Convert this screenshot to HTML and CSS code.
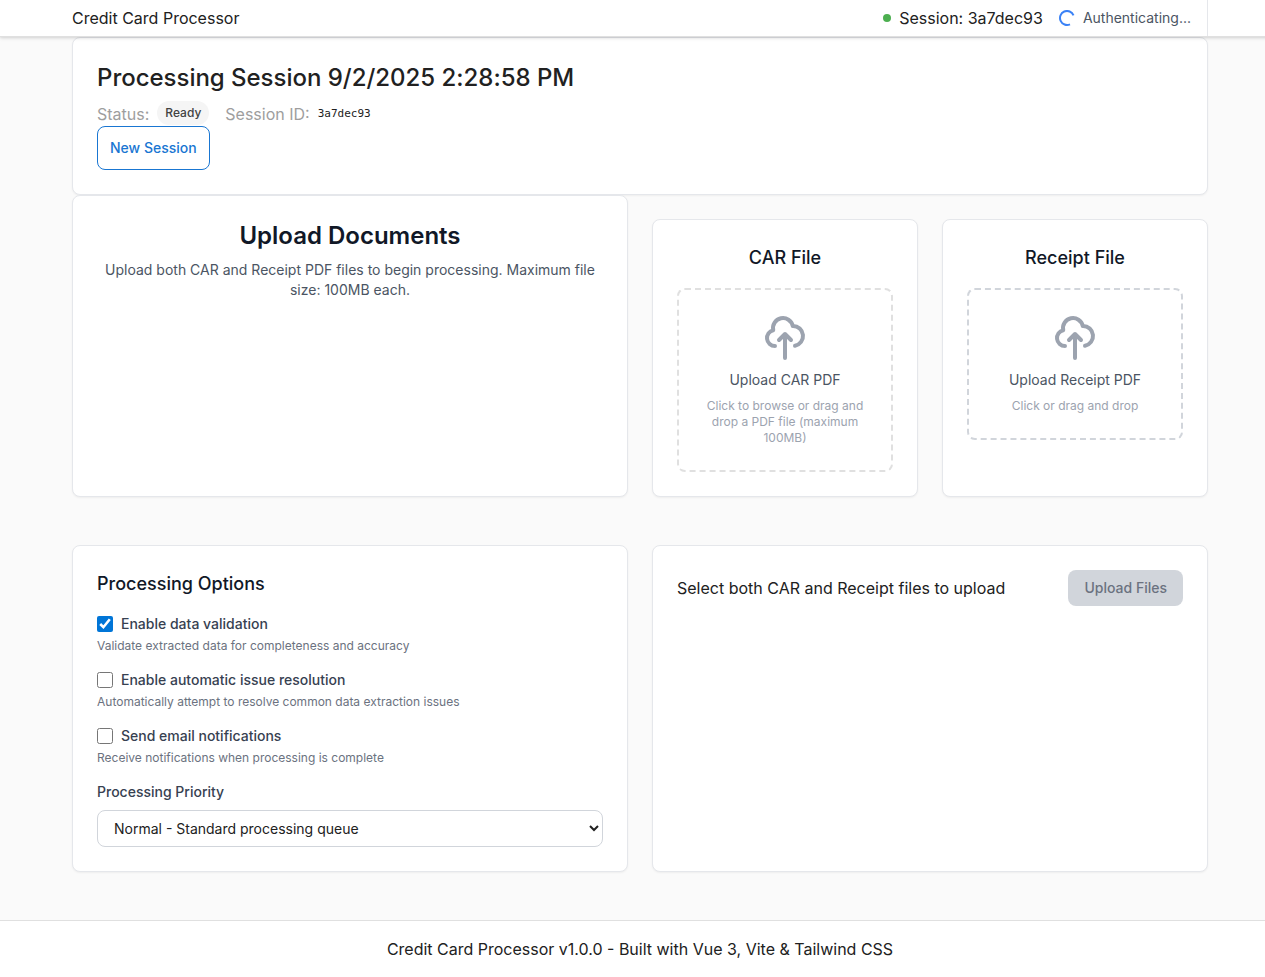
FILE: index.html
```html
<!DOCTYPE html>
<html lang="en">
<head>
<meta charset="utf-8">
<title>Credit Card Processor</title>
<link rel="stylesheet" href="styles.css">
</head>
<body>
<div class="page">
  <header class="header">
    <div class="container header-row">
      <div class="brand">Credit Card Processor</div>
      <div class="header-right">
        <span class="dot"></span>
        <span class="header-session">Session: 3a7dec93</span>
        <div class="auth">
          <svg class="spinner" viewBox="0 0 16 16" fill="none"><path d="M14.5 5.3A7 7 0 1 0 11 14.3"/></svg>
          <span>Authenticating...</span>
        </div>
      </div>
    </div>
  </header>
  <main class="container main">
    <section class="card">
      <h1 class="session-title">Processing Session 9/2/2025 2:28:58 PM</h1>
      <div class="status-row">
        <span class="muted">Status:</span>
        <span class="badge">Ready</span>
        <span class="muted id-label">Session ID:</span>
        <code class="session-id">3a7dec93</code>
      </div>
      <button class="btn-outline">New Session</button>
    </section>
    <section class="grid">
      <div class="card intro">
        <h2 class="intro-title">Upload Documents</h2>
        <p class="intro-text">Upload both CAR and Receipt PDF files to begin processing. Maximum file size: 100MB each.</p>
      </div>
      <div class="uploads">
        <div class="card upload">
          <h3 class="card-title">CAR File</h3>
          <div class="drop drop-neutral">
            <svg class="cloud" viewBox="0 0 24 24" fill="none"><path d="M7 16a4 4 0 01-.88-7.903A5 5 0 1115.9 6L16 6a5 5 0 011 9.9M15 13l-3-3m0 0l-3 3m3-3v12"/></svg>
            <p class="drop-title">Upload CAR PDF</p>
            <p class="drop-hint">Click to browse or drag and drop a PDF file (maximum 100MB)</p>
          </div>
        </div>
        <div class="card upload">
          <h3 class="card-title">Receipt File</h3>
          <div class="drop">
            <svg class="cloud" viewBox="0 0 24 24" fill="none"><path d="M7 16a4 4 0 01-.88-7.903A5 5 0 1115.9 6L16 6a5 5 0 011 9.9M15 13l-3-3m0 0l-3 3m3-3v12"/></svg>
            <p class="drop-title">Upload Receipt PDF</p>
            <p class="drop-hint">Click or drag and drop</p>
          </div>
        </div>
      </div>
    </section>
    <section class="grid grid-lower">
      <div class="card">
        <h3 class="card-title">Processing Options</h3>
        <div class="option">
          <label class="option-label"><input class="check" type="checkbox" checked><span>Enable data validation</span></label>
          <p class="option-hint">Validate extracted data for completeness and accuracy</p>
        </div>
        <div class="option">
          <label class="option-label"><input class="check" type="checkbox"><span>Enable automatic issue resolution</span></label>
          <p class="option-hint">Automatically attempt to resolve common data extraction issues</p>
        </div>
        <div class="option">
          <label class="option-label"><input class="check" type="checkbox"><span>Send email notifications</span></label>
          <p class="option-hint">Receive notifications when processing is complete</p>
        </div>
        <label class="option-label" for="priority">Processing Priority</label>
        <select class="select" id="priority"><option>Normal - Standard processing queue</option></select>
      </div>
      <div class="card">
        <div class="action-row">
          <span>Select both CAR and Receipt files to upload</span>
          <button class="btn-disabled" disabled>Upload Files</button>
        </div>
      </div>
    </section>
  </main>
  <footer class="footer">Credit Card Processor v1.0.0 - Built with Vue 3, Vite &amp; Tailwind CSS</footer>
</div>
</body>
</html>
```

FILE: styles.css
```css
*, *::before, *::after { box-sizing: border-box; }
html { overflow: hidden; }
body {
  margin: 0;
  background: #fafafa;
  color: #212121;
  font-family: Inter, "Liberation Sans", sans-serif;
  font-size: 16px;
  line-height: 24px;
}
h1, h2, h3, p { margin: 0; }
button, select { font-family: inherit; letter-spacing: inherit; }
.page { width: 1280px; }
.container { width: 1200px; margin: 0 auto; padding: 0 32px; }

.header {
  position: relative;
  height: 37px;
  background: #fff;
  border-bottom: 1px solid #e0e0e0;
  box-shadow: 0 1px 4px rgba(0, 0, 0, .12), 0 1px 2px rgba(0, 0, 0, .06);
}
.header-row { display: flex; justify-content: space-between; align-items: center; height: 36px; }
.header-right { display: flex; align-items: center; height: 36px; }
.dot { width: 8px; height: 8px; border-radius: 50%; background: #4caf50; margin-right: 8px; }
.auth {
  display: flex;
  align-items: center;
  gap: 8px;
  height: 36px;
  padding: 0 16px;
  border-right: 1px solid #e5e7eb;
  color: #4b5563;
  font-size: 14px;
}
.spinner { width: 16px; height: 16px; stroke: #3b82f6; stroke-width: 2; }

.card {
  background: #fff;
  border: 1px solid #e5e7eb;
  border-radius: 8px;
  padding: 24px;
  box-shadow: 0 1px 2px rgba(0, 0, 0, .05);
}
.session-title { font-size: 24px; line-height: 32px; font-weight: 500; letter-spacing: -.02px; margin-bottom: 8px; }
.status-row { display: flex; align-items: center; height: 24px; }
.muted { color: #9e9e9e; }
.badge {
  margin: 0 16px 2px 8px;
  padding: 4px 8px;
  border-radius: 12px;
  background: #f5f5f5;
  color: #424242;
  font-size: 12px;
  line-height: 16px;
  font-weight: 500;
}
.session-id { margin-left: 8px; font-family: "DejaVu Sans Mono", monospace; font-size: 11px; letter-spacing: 0; }
.btn-outline {
  display: block;
  height: 44px;
  padding: 0 12px 1px;
  border: 1px solid #1976d2;
  border-radius: 8px;
  background: #fff;
  color: #1976d2;
  font-size: 14px;
  line-height: 20px;
  font-weight: 500;
}

.grid { display: grid; grid-template-columns: 1fr 1fr; column-gap: 24px; }
.grid-lower { margin: 48px 0; }
.intro { text-align: center; }
.intro-title { margin-bottom: 8px; font-size: 24px; line-height: 32px; font-weight: 600; color: #111827; }
.intro-text { font-size: 14px; line-height: 20px; color: #4b5563; }
.uploads { display: grid; grid-template-columns: 1fr 1fr; gap: 24px; margin-top: 24px; }
.upload { text-align: center; }
.card-title { margin-bottom: 16px; font-size: 18px; line-height: 28px; font-weight: 500; color: #111827; }
.drop { padding: 24px; border: 2px dashed #d1d5db; border-radius: 8px; }
.drop-neutral { border-color: #e0e0e0; }
.cloud {
  display: block;
  width: 48px;
  height: 48px;
  margin: 0 auto 8px;
  stroke: #9ca3af;
  stroke-width: 2;
  stroke-linecap: round;
  stroke-linejoin: round;
}
.drop-title { margin-bottom: 8px; font-size: 14px; line-height: 20px; color: #4b5563; }
.drop-hint { font-size: 12px; line-height: 16px; color: #9ca3af; }

.option { margin-bottom: 16px; }
.option-label { display: flex; align-items: center; gap: 8px; font-size: 14px; line-height: 20px; font-weight: 500; color: #374151; }
.check { width: 16px; height: 16px; margin: 0; accent-color: #0075d7; }
.option-hint { margin-top: 4px; font-size: 12px; line-height: 16px; color: #6b7280; }
.select {
  display: block;
  width: 100%;
  height: 37px;
  margin-top: 8px;
  padding: 0 0 0 12px;
  border: 1px solid #d1d5db;
  border-radius: 8px;
  background: #fff;
  color: #212121;
  font-size: 14px;
}
.action-row { display: flex; justify-content: space-between; align-items: center; }
.btn-disabled {
  height: 36px;
  padding: 0 16px 1px;
  border: 0;
  border-radius: 8px;
  background: #d1d5db;
  color: #6b7280;
  font-size: 14px;
  line-height: 20px;
  font-weight: 500;
}
.footer { padding: 16px 0; background: #fff; border-top: 1px solid #e0e0e0; text-align: center; }
```
